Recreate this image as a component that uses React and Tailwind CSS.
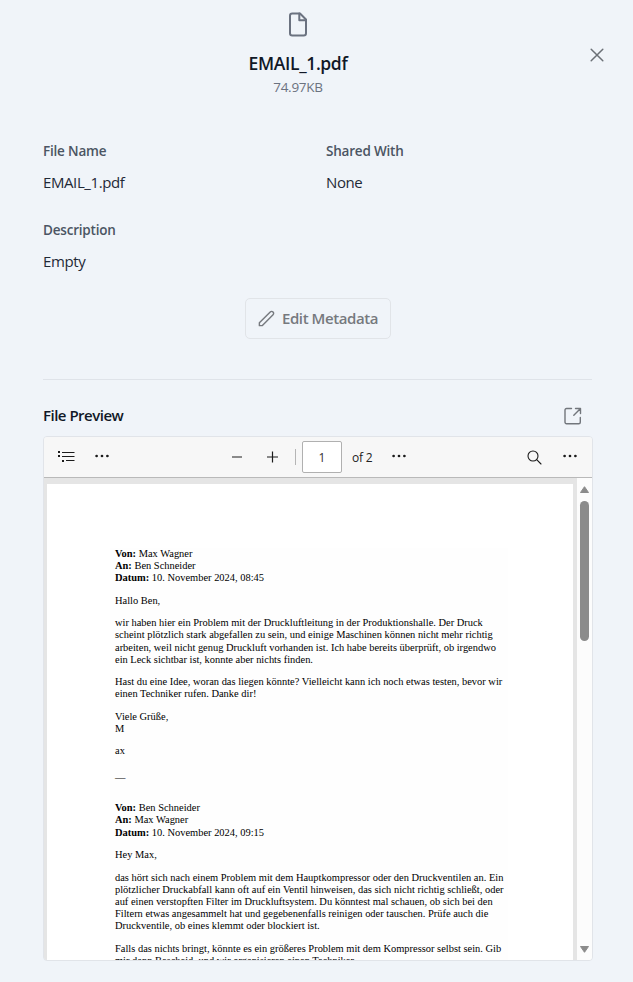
import React from "react";

const messages = [
  {
    gap: "mt-0",
    lines: [
      ["Von:", " Max Wagner"],
      ["An:", " Ben Schneider"],
      ["Datum:", " 10. November 2024, 08:45"],
    ],
  },
  { gap: "mt-[10.6px]", lines: [["", "Hallo Ben,"]] },
  {
    gap: "mt-[10.4px]",
    lines: [
      ["", "wir haben hier ein Problem mit der Druckluftleitung in der Produktionshalle. Der Druck"],
      ["", "scheint plötzlich stark abgefallen zu sein, und einige Maschinen können nicht mehr richtig"],
      ["", "arbeiten, weil nicht genug Druckluft vorhanden ist. Ich habe bereits überprüft, ob irgendwo"],
      ["", "ein Leck sichtbar ist, konnte aber nichts finden."],
    ],
  },
  {
    gap: "mt-[10.4px]",
    lines: [
      ["", "Hast du eine Idee, woran das liegen könnte? Vielleicht kann ich noch etwas testen, bevor wir"],
      ["", "einen Techniker rufen. Danke dir!"],
    ],
  },
  { gap: "mt-[10.4px]", lines: [["", "Viele Grüße,"], ["", "M"]] },
  { gap: "mt-[10.4px]", lines: [["", "ax"]] },
  { gap: "mt-[15px]", lines: [["", "—"]] },
  {
    gap: "mt-[17.9px]",
    lines: [
      ["Von:", " Ben Schneider"],
      ["An:", " Max Wagner"],
      ["Datum:", " 10. November 2024, 09:15"],
    ],
  },
  { gap: "mt-[10.2px]", lines: [["", "Hey Max,"]] },
  {
    gap: "mt-[10.6px]",
    lines: [
      ["", "das hört sich nach einem Problem mit dem Hauptkompressor oder den Druckventilen an. Ein"],
      ["", "plötzlicher Druckabfall kann oft auf ein Ventil hinweisen, das sich nicht richtig schließt, oder"],
      ["", "auf einen verstopften Filter im Druckluftsystem. Du könntest mal schauen, ob sich bei den"],
      ["", "Filtern etwas angesammelt hat und gegebenenfalls reinigen oder tauschen. Prüfe auch die"],
      ["", "Druckventile, ob eines klemmt oder blockiert ist."],
    ],
  },
  {
    gap: "mt-[11.2px]",
    lines: [
      ["", "Falls das nichts bringt, könnte es ein größeres Problem mit dem Kompressor selbst sein. Gib"],
      ["", "mir dann Bescheid, und wir organisieren einen Techniker."],
    ],
  },
];

function Dots() {
  return (
    <svg width="16" height="4" viewBox="0 0 16 4" fill="#1b1b1b" className="block shrink-0">
      <circle cx="2.6" cy="2" r="1.35" />
      <circle cx="8" cy="2" r="1.35" />
      <circle cx="13.4" cy="2" r="1.35" />
    </svg>
  );
}

function Header() {
  return (
    <header className="flex h-[107px] pl-[43px]">
      <div className="flex w-[510px] shrink-0 flex-col items-center pt-[10px]">
        <svg width="24" height="28" viewBox="0 0 24 28" fill="none" stroke="#6b7280" strokeWidth="2" strokeLinejoin="round" strokeLinecap="round">
          <path d="M14 3.500H6.300a2.300 2.300 0 0 0-2.300 2.300v17.400a2.300 2.300 0 0 0 2.300 2.300h11.400a2.300 2.300 0 0 0 2.300-2.300V9.500z" />
          <path d="M13.300 3.500v6.700H20" />
        </svg>
        <h1 className="mt-[11px] text-[17.5px] leading-7 font-semibold tracking-[-0.35px] text-[#111827]">EMAIL_1.pdf</h1>
        <p className="text-[13.5px] leading-5 tracking-[-0.25px] text-[#6b7280]">74.97KB</p>
      </div>
      <div className="flex w-[80px] shrink-0 pt-[45px] pl-[34px]">
        <svg width="20" height="20" viewBox="0 0 20 20" fill="none" stroke="#6b7076" strokeWidth="1.5" strokeLinecap="round">
          <path d="M4.200 4.200l11.600 11.600M15.800 4.200L4.200 15.800" />
        </svg>
      </div>
    </header>
  );
}

function Field({ label, value }) {
  return (
    <div className="h-[79px]">
      <div className="text-[13.5px] leading-5 font-semibold tracking-[-0.2px] text-[#4b5563]">{label}</div>
      <div className="mt-[9px] text-[15px] leading-6 tracking-[-0.4px] text-[#1f2937]">{value}</div>
    </div>
  );
}

function Toolbar() {
  return (
    <div className="flex h-[41px] shrink-0 items-center border-b border-[#b9b9b9] bg-[#f7f7f7] pl-[14px]">
      <svg width="17" height="12" viewBox="0 0 17 12" fill="#1b1b1b" className="shrink-0">
        <path d="M0 0h2v2H0zM4 1h12.500v1H4zM0 4h2v2H0zM4 5h12.500v1H4zM4 9h2v2H4zM8 9h8.500v1H8z" />
      </svg>
      <div className="mb-[2px] ml-[19px]"><Dots /></div>
      <div className="ml-[122px] h-[2px] w-[10px] shrink-0 bg-[#8a8a8a]" />
      <svg width="12" height="12" viewBox="0 0 12 12" fill="none" stroke="#1b1b1b" strokeWidth="1.2" className="mb-px ml-[25px] shrink-0">
        <path d="M5.500 .5v11M0 6h11" />
      </svg>
      <div className="ml-[16px] h-4 w-px shrink-0 bg-[#b5b5b5]" />
      <div className="ml-[6px] flex h-8 w-10 shrink-0 items-center justify-center rounded-[2px] border border-[#b0b0b0] bg-white pt-px text-[12px] text-[#333]">1</div>
      <div className="ml-[10px] w-[24px] shrink-0 pt-px text-[12px] tracking-[-0.2px] whitespace-nowrap text-[#222]">of 2</div>
      <div className="mb-[2px] ml-[15px]"><Dots /></div>
      <svg width="15" height="15" viewBox="0 0 15 15" fill="none" stroke="#1b1b1b" strokeWidth="1.1" strokeLinecap="round" className="ml-[120px] shrink-0">
        <circle cx="6" cy="6" r="5" />
        <path d="M9.700 9.700l4.300 4.300" />
      </svg>
      <div className="mb-[2px] ml-[20px]"><Dots /></div>
    </div>
  );
}

function Scrollbar() {
  return (
    <div className="flex w-[15px] shrink-0 flex-col items-center bg-[#fcfcfc] pt-[8px] pb-[7px]">
      <svg width="9" height="7" viewBox="0 0 9 7" fill="#8b8b8b" stroke="#8b8b8b" strokeLinejoin="round" className="shrink-0">
        <path d="M4.500 .7L8.500 6.500H.5z" />
      </svg>
      <div className="mt-[8px] h-[140px] w-[9px] shrink-0 rounded-full bg-[#8b8b8b]" />
      <svg width="9" height="7" viewBox="0 0 9 7" fill="#8b8b8b" stroke="#8b8b8b" strokeLinejoin="round" className="mt-auto shrink-0">
        <path d="M4.500 6.300L8.500 .5H.5z" />
      </svg>
    </div>
  );
}

function PdfPage() {
  return (
    <div className="min-w-0 flex-1 overflow-hidden bg-[#e5e5e5] pt-[6px] pr-[4px] pl-[3px]">
      <div className="h-[600px] bg-white pt-[64px] pl-[63px]">
        <div className="h-[536px] w-[398px] bg-[#fefefe] pl-[5px] font-['Liberation_Serif',serif] text-[10.44px] leading-[12.1px] text-black">
          {messages.map((block, i) => (
            <div key={i} className={block.gap}>
              {block.lines.map(([label, text], j) => (
                <div key={j} className="whitespace-pre">
                  <b>{label}</b>
                  {text}
                </div>
              ))}
            </div>
          ))}
        </div>
      </div>
    </div>
  );
}

export default function App() {
  return (
    <main className="flex h-[982px] w-[633px] flex-col overflow-hidden bg-[#f0f4f9] font-['Open_Sans','Noto_Sans',sans-serif]">
      <Header />
      <section className="mt-[34px] grid grid-cols-[283px_1fr] pl-[43px]">
        <Field label="File Name" value="EMAIL_1.pdf" />
        <Field label="Shared With" value="None" />
        <Field label="Description" value="Empty" />
      </section>
      <button className="mt-[-1px] ml-[245px] flex h-[41px] w-[146px] shrink-0 items-center rounded-[5px] border border-[#e1e4e8] pl-[11px] text-[15px] font-semibold tracking-[-0.42px] whitespace-nowrap text-[#76797e]">
        <svg width="19" height="19" viewBox="0 0 24 24" fill="none" stroke="#76797e" strokeWidth="1.8" strokeLinejoin="round" className="mr-[6px] mb-px shrink-0">
          <path d="M16.732 3.732a2.500 2.500 0 1 1 3.536 3.536L6.500 21.036H3v-3.572L16.732 3.732z" />
        </svg>
        Edit Metadata
      </button>
      <div className="mt-[40px] mr-[41px] ml-[43px] h-px shrink-0 bg-[#dfe3e9]" />
      <div className="mt-[23px] mr-[51px] ml-[43px] flex h-[25px] shrink-0 items-center justify-between">
        <h2 className="text-[15px] font-semibold tracking-[-0.5px] text-[#111827]">File Preview</h2>
        <svg width="18" height="18" viewBox="0 0 18 18" fill="none" stroke="#72767c" strokeWidth="1.4" strokeLinecap="round" strokeLinejoin="round">
          <path d="M7.500 1.500h-5A1.500 1.500 0 0 0 1 3v12.300a1.500 1.500 0 0 0 1.500 1.500h12.300a1.500 1.500 0 0 0 1.500-1.500V10.500" />
          <path d="M11.500 1.500h5v5M16.500 1.500L9.800 8.200" />
        </svg>
      </div>
      <section className="mt-[8px] ml-[43px] flex h-[525px] w-[550px] shrink-0 flex-col overflow-hidden rounded-[4px] border border-[#e1e4e9]">
        <Toolbar />
        <div className="flex min-h-0 flex-1">
          <PdfPage />
          <Scrollbar />
        </div>
      </section>
    </main>
  );
}
